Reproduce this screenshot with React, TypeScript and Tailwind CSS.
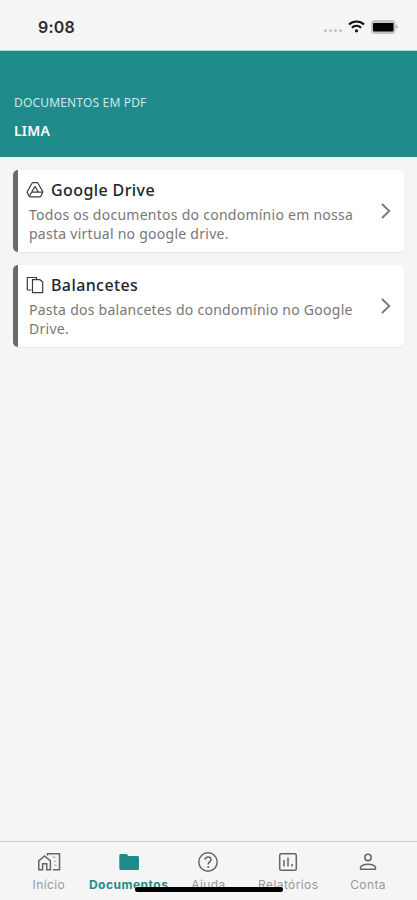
import React from 'react';

const DriveIcon = () => (
  <svg className="w-[18px] h-[18px]" viewBox="0 0 18 18" fill="none" stroke="currentColor" strokeWidth="1.2" strokeLinejoin="round">
    <path d="M7 1.600h4c.5 0 .8.200 1 .600l4.700 8.300c.200.400.200.700 0 1.100l-1.900 3.600c-.2.400-.6.600-1 .6H4.200c-.4 0-.8-.2-1-.6l-1.900-3.600c-.2-.4-.2-.7 0-1.100L6 2.200c.2-.4.500-.6 1-.6z" />
    <path d="M9 5.300 3.500 15M6 11.200h10.500M9 5.300l3.300 5.900" />
  </svg>
);

const CopyIcon = () => (
  <svg className="w-[18px] h-[18px]" viewBox="0 0 18 18" fill="none" stroke="currentColor" strokeWidth="1.2">
    <path d="M5.500 14H1.300V1.500h9.200v2" />
    <path d="M6.500 3.700h7.400l2.800 2.300v10.700H6.500z" />
  </svg>
);

const ChevronIcon = () => (
  <svg className="w-[10px] h-4 text-[#777777]" viewBox="0 0 10 16" fill="none" stroke="currentColor" strokeWidth="1.8">
    <path d="M1 1l7.300 7L1 15" />
  </svg>
);

const HomeIcon = () => (
  <svg className="w-6 h-6" viewBox="0 0 24 24" fill="none" stroke="currentColor" strokeWidth="1.5">
    <path d="M1.800 19.700V10.800L7.600 6l5.800 4.800v8.900H9.700v-6H5.600v6z" />
    <path d="M10.500 5.500V3.800h12v15.900h-6.700" />
    <path d="M15.500 7.300h3M17 11.300h2.500M17 15.300h2.500" strokeOpacity="0.4" />
  </svg>
);

const FolderIcon = () => (
  <svg className="w-6 h-6" viewBox="0 0 24 24" fill="currentColor">
    <path d="M4 4h5.600l2 2H20.500c1 0 1.500.6 1.500 1.500v11c0 1-.6 1.500-1.500 1.500H4c-1 0-1.700-.6-1.700-1.500v-13C2.300 4.600 3 4 4 4z" />
  </svg>
);

const HelpIcon = () => (
  <svg className="w-6 h-6" viewBox="0 0 24 24" fill="none" stroke="currentColor" strokeWidth="1.5">
    <circle cx="12" cy="12" r="9.200" />
    <path d="M9 9.700c.1-1.800 1.300-2.800 3-2.800s3 1 3 2.600c0 2.300-2.800 2.400-2.800 4.900" />
    <circle cx="12.200" cy="17" r="1" fill="currentColor" stroke="none" />
  </svg>
);

const ReportIcon = () => (
  <svg className="w-6 h-6" viewBox="0 0 24 24" fill="none" stroke="currentColor" strokeWidth="1.5">
    <rect x="3.700" y="3.700" width="16.600" height="16.600" rx="1.500" />
    <path d="M8 10v6.500M12 7.500v9M16 14v2.500" />
  </svg>
);

const AccountIcon = () => (
  <svg className="w-6 h-6" viewBox="0 0 24 24" fill="none" stroke="currentColor" strokeWidth="1.5">
    <circle cx="12" cy="7.500" r="3.200" />
    <path d="M4.500 19.300v-1.600c0-2 3.500-3.400 7.500-3.400s7.500 1.400 7.500 3.400v1.600z" strokeLinejoin="round" />
  </svg>
);

const StatusBar = () => (
  <div className="flex items-center justify-between h-[51px] pl-[38px] pr-[19px] pt-[3px] border-b border-[#b5d8d8]">
    <span className="pt-px font-['Inter',sans-serif] text-base leading-5 tracking-[0.2px] font-semibold text-[#2b2b2b]">9:08</span>
    <div className="flex items-center gap-[6px]">
      <div className="flex gap-[2px] pt-2">
        {[0, 1, 2, 3].map((i) => (
          <span key={i} className="w-[3px] h-[3px] rounded-full bg-[#c2c2c2]" />
        ))}
      </div>
      <svg className="w-[17px] h-[13px]" viewBox="0 0 17 13" fill="none" stroke="#111111" strokeWidth="2.2">
        <path d="M1 4.500c4.300-4 10.700-4 15 0" />
        <path d="M3.900 7.800c2.700-2.500 6.500-2.500 9.200 0" />
        <circle cx="8.500" cy="10.800" r="1.600" fill="#111111" stroke="none" />
      </svg>
      <svg className="w-[27px] h-[14px]" viewBox="0 0 27 14">
        <rect x="0" y="0" width="24.500" height="14" rx="4" fill="#c4c4c4" />
        <rect x="2" y="3" width="20.500" height="8.500" rx="1" fill="#000000" />
        <path d="M25 5c2 .6 2 3.400 0 4z" fill="#aaaaaa" />
      </svg>
    </div>
  </div>
);

interface DocumentCardProps {
  title: string;
  description: string;
  icon: React.ReactNode;
}

const DocumentCard: React.FC<DocumentCardProps> = ({ title, description, icon }) => (
  <div className="flex items-center h-[82px] bg-white rounded-[5px] border-l-[5px] border-[#6b6b6b] shadow-[0_1px_1px_rgba(0,0,0,0.06)] pl-2 pr-[13px]">
    <div className="flex-1 min-w-0">
      <div className="flex items-center gap-[7px] h-[21px] text-[#3c3c3c]">
        {icon}
        <h2 className="text-base font-medium tracking-[0.4px] text-[#222429] whitespace-nowrap">{title}</h2>
      </div>
      <p className="w-[335px] mt-[5px] pl-[3px] text-[14px] leading-[19px] tracking-[0.26px] text-[#777777]">{description}</p>
    </div>
    <ChevronIcon />
  </div>
);

const tabs = [
  { label: 'Início', icon: HomeIcon },
  { label: 'Documentos', icon: FolderIcon, active: true },
  { label: 'Ajuda', icon: HelpIcon },
  { label: 'Relatórios', icon: ReportIcon },
  { label: 'Conta', icon: AccountIcon },
];

export default function App() {
  return (
    <div className="relative flex flex-col h-[900px] w-full overflow-hidden bg-[#f5f5f5] font-['Noto_Sans',sans-serif]">
      <StatusBar />

      <header className="h-[106px] bg-[#1f8c8b] px-[14px] pt-[43px]">
        <p className="text-xs leading-[18px] tracking-[0.17px] text-[#cfe7e7]">DOCUMENTOS EM PDF</p>
        <h1 className="mt-[10px] text-sm leading-[18px] tracking-[0.2px] font-semibold text-white">LIMA</h1>
      </header>

      <main className="flex flex-1 flex-col gap-[13px] px-[13px] pt-[13px]">
        <DocumentCard
          title="Google Drive"
          description="Todos os documentos do condomínio em nossa pasta virtual no google drive."
          icon={<DriveIcon />}
        />
        <DocumentCard
          title="Balancetes"
          description="Pasta dos balancetes do condomínio no Google Drive."
          icon={<CopyIcon />}
        />
      </main>

      <nav className="flex h-[59px] border-t border-[#c8c8c8] px-[9px] pt-2">
        {tabs.map(({ label, icon: Icon, active }) => (
          <div key={label} className={`flex flex-1 flex-col items-center ${active ? 'text-[#1f8c8b]' : 'text-[#666666]'}`}>
            <Icon />
            <span className={`mt-[3px] font-['Inter',sans-serif] text-[12px] leading-4 ${active ? 'font-bold tracking-[0.5px]' : 'tracking-[0.4px] text-[#999999]'}`}>{label}</span>
          </div>
        ))}
      </nav>
      <div className="absolute bottom-2 left-[135px] h-[5px] w-[148px] rounded-full bg-black" />
    </div>
  );
}
